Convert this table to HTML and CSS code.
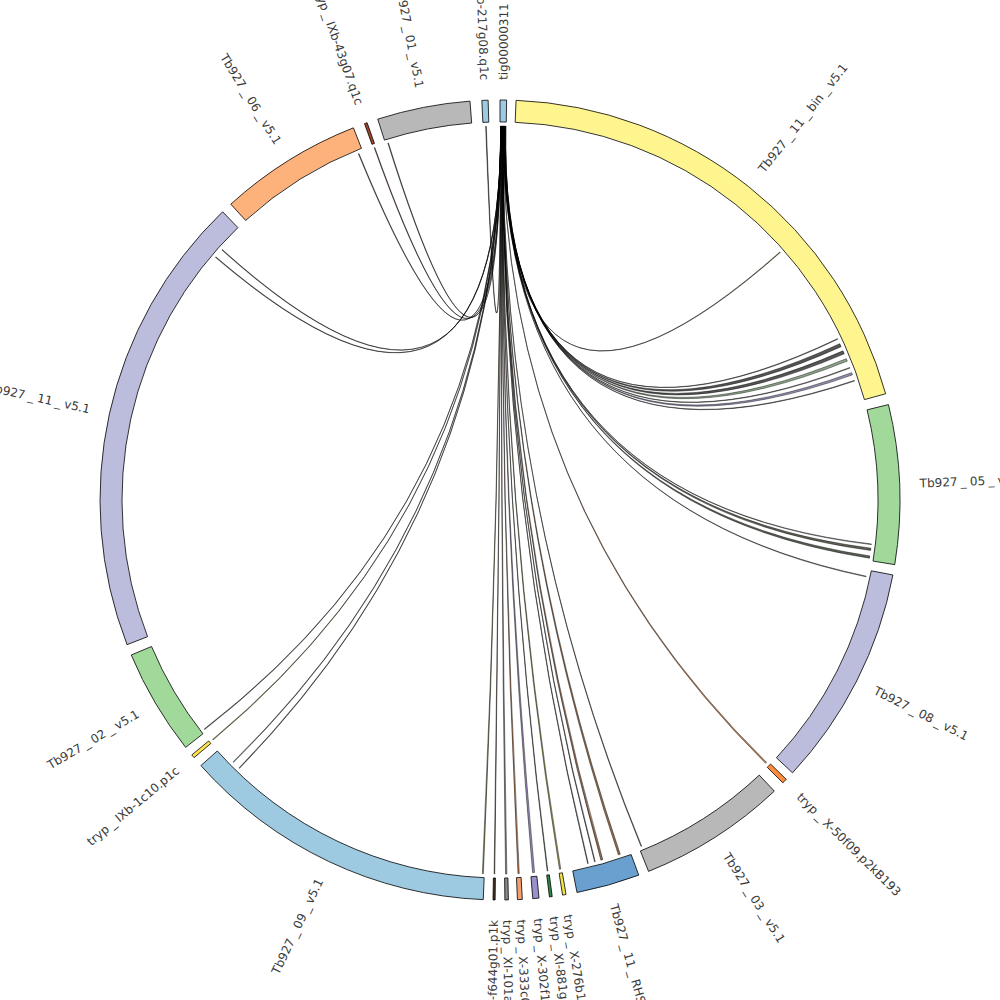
FILE: index.html
```html
<!DOCTYPE html>
<html lang="en">
<head>
<meta charset="utf-8">
<title>Circos plot</title>
<link rel="stylesheet" href="styles.css">
</head>
<body>
<div class="canvas">
  <svg id="chart" class="chart" width="1000" height="1000" viewBox="0 0 1000 1000" xmlns="http://www.w3.org/2000/svg">
    <g id="links" class="links"></g>
    <g id="segments" class="segments"></g>
    <g id="labels" class="labels"></g>
  </svg>
</div>
<script src="script.js"></script>
</body>
</html>
```

FILE: styles.css
```css
html, body {
  margin: 0;
  padding: 0;
  background: #ffffff;
}
.canvas {
  width: 1000px;
  height: 1000px;
  overflow: hidden;
}
.chart {
  display: block;
}
.seg {
  stroke: #000000;
  stroke-width: 0.8;
}
.lnk {
  stroke: #000000;
  stroke-width: 0.45;
  fill-opacity: 0.8;
}
.lbl {
  font-family: "DejaVu Sans", Verdana, sans-serif;
  font-size: 12px;
  fill: #3a3a3a;
  dominant-baseline: central;
}
```

FILE: script.js
```js
(function () {
  var NS = 'http://www.w3.org/2000/svg';
  var cx = 500, cy = 500, R1 = 378, R2 = 400, RL = 374, RT = 420;

  function pt(r, a) {
    var t = a * Math.PI / 180;
    return [cx + r * Math.sin(t), cy - r * Math.cos(t)];
  }
  function f(p) { return p[0].toFixed(2) + ' ' + p[1].toFixed(2); }

  var segments = [
    ['tig00000311', 0.0, 0.95, '#9ecae1'],
    ['Tb927_11_bin_v5.1', 2.3, 74.6, '#fff58f'],
    ['Tb927_05_v5.1', 76.2, 99.3, '#a1d99b'],
    ['Tb927_08_v5.1', 100.8, 133.0, '#bcbddc'],
    ['tryp_X-50f09.p2kB193', 134.3, 135.0, '#fd8d3c'],
    ['Tb927_03_v5.1', 136.7, 158.2, '#b8b8b8'],
    ['Tb927_11_RHS_v5.1', 159.7, 168.9, '#6aa0cf'],
    ['tryp_X-276b10.p2k', 170.5, 171.0, '#f2e34a'],
    ['tryp_XI-881g09.q1c', 172.5, 172.9, '#2f8a4a'],
    ['tryp_X-302f11.p1k', 174.4, 175.3, '#9b8fcc'],
    ['tryp_X-333c03.q1k', 176.8, 177.5, '#f4a070'],
    ['tryp_XI-101a12.p1c', 178.8, 179.3, '#8c8c8c'],
    ['tryp_XI-f644g01.p1k', 180.7, 181.0, '#4a3020'],
    ['Tb927_09_v5.1', 182.4, 228.4, '#9ecae1'],
    ['tryp_IXb-1c10.p1c', 229.9, 230.4, '#ffe54d'],
    ['Tb927_02_v5.1', 231.8, 247.2, '#a1d99b'],
    ['Tb927_11_v5.1', 248.8, 316.1, '#bcbddc'],
    ['Tb927_06_v5.1', 317.7, 338.5, '#feb27b'],
    ['tryp_IXb-43g07.q1c', 340.2, 340.6, '#a0442a'],
    ['Tb927_01_v5.1', 342.2, 355.7, '#b8b8b8'],
    ['tryp_IXb-217g08.q1c', 357.4, 358.3, '#9ecae1']
  ];

  var links = [
    [48.45, 48.55, '#6b6b3a'],
    [64.45, 64.55, '#555555'],
    [65.3, 65.8, '#2a2a2a'],
    [66.5, 67.0, '#2a2a2a'],
    [67.8, 68.2, '#6f8f6a'],
    [69.25, 69.35, '#666666'],
    [70.1, 70.45, '#77739e'],
    [71.35, 71.45, '#555555'],
    [96.75, 96.85, '#777777'],
    [97.4, 97.75, '#3a3a2a'],
    [98.6, 98.95, '#2f3a2a'],
    [101.75, 101.85, '#707090'],
    [134.55, 134.75, '#c06a30'],
    [157.75, 157.85, '#555555'],
    [161.25, 161.55, '#7a4a20'],
    [164.05, 164.35, '#7a4a2a'],
    [165.25, 165.35, '#444444'],
    [166.35, 166.45, '#444444'],
    [170.65, 170.85, '#8a8a30'],
    [172.65, 172.75, '#2f5a3a'],
    [174.7, 175.0, '#7a70a8'],
    [177.05, 177.25, '#b0602a'],
    [178.95, 179.15, '#707070'],
    [180.8, 180.9, '#4a2a1a'],
    [182.55, 182.7, '#7a7a2a'],
    [224.15, 224.25, '#444444'],
    [225.45, 225.55, '#4a6a8a'],
    [230.1, 230.2, '#8a8a30'],
    [232.15, 232.25, '#444444'],
    [310.45, 310.55, '#444444'],
    [311.95, 312.05, '#444444'],
    [337.75, 337.85, '#444444'],
    [340.35, 340.45, '#6a2a1a'],
    [342.55, 342.65, '#444444'],
    [357.8, 357.9, '#333333']
  ];

  function el(name, attrs, parent) {
    var e = document.createElementNS(NS, name);
    for (var k in attrs) e.setAttribute(k, attrs[k]);
    parent.appendChild(e);
    return e;
  }

  var gs = document.getElementById('segments');
  var gl = document.getElementById('links');
  var gt = document.getElementById('labels');

  segments.forEach(function (s) {
    var a0 = s[1], a1 = s[2];
    var large = (a1 - a0) > 180 ? 1 : 0;
    var d = 'M' + f(pt(R2, a0)) +
      ' A' + R2 + ' ' + R2 + ' 0 ' + large + ' 1 ' + f(pt(R2, a1)) +
      ' L' + f(pt(R1, a1)) +
      ' A' + R1 + ' ' + R1 + ' 0 ' + large + ' 0 ' + f(pt(R1, a0)) + ' Z';
    el('path', { d: d, fill: s[3], 'class': 'seg' }, gs);

    var mid = (a0 + a1) / 2;
    var p = pt(RT, mid);
    var right = mid < 180;
    var rot = right ? mid - 90 : mid + 90;
    var t = el('text', {
      'class': 'lbl',
      transform: 'translate(' + p[0].toFixed(2) + ',' + p[1].toFixed(2) + ') rotate(' + rot.toFixed(2) + ')',
      'text-anchor': right ? 'start' : 'end'
    }, gt);
    // underscores are set with a little air on both sides, as in the original plot
    var parts = s[0].split('_');
    parts.forEach(function (part, i) {
      if (i > 0) {
        var u = el('tspan', { dx: '3.2' }, t);
        u.textContent = '_';
      }
      if (part.length) {
        var w = el('tspan', i > 0 ? { dx: '3.2' } : {}, t);
        w.textContent = part;
      }
    });
  });

  // source positions in tig00000311, sorted by target angle descending
  var order = links.slice().sort(function (a, b) { return b[0] - a[0]; });
  var total = 0;
  order.forEach(function (l) { total += (l[1] - l[0]); });
  var k = 0.8 / total;
  var pos = 0.08;
  order.forEach(function (l) {
    var w = (l[1] - l[0]) * k;
    l.s1 = pos; l.s2 = pos + w; pos += w;
  });

  var C = cx.toFixed(2) + ' ' + cy.toFixed(2);
  order.slice().reverse().forEach(function (l) {
    var d = 'M' + f(pt(RL, l.s1)) +
      ' Q' + C + ' ' + f(pt(RL, l[1])) +
      ' L' + f(pt(RL, l[0])) +
      ' Q' + C + ' ' + f(pt(RL, l.s2)) + ' Z';
    el('path', { d: d, fill: l[2], 'class': 'lnk' }, gl);
  });
})();
```
